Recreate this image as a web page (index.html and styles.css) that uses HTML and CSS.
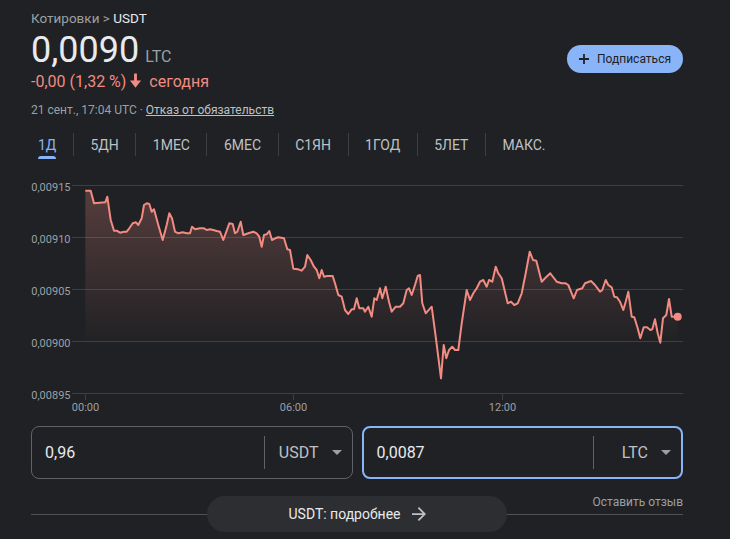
FILE: index.html
```html
<!DOCTYPE html>
<html lang="ru">
    <head>
        <meta charset="utf-8">
        <title>USDT / LTC</title>
        <link rel="stylesheet" href="styles.css">
    </head>
    <body>
        <div class="page">
            <div class="crumbs"><span>Котировки &gt; </span><span class="sym">USDT</span></div>

            <div class="quote">
                <div>
                    <div class="price">0,0090<span class="cur">LTC</span></div>
                    <div class="change">-0,00 (1,32 %)<svg viewBox="0 0 24 24"><path d="M10.2 3h3.6v9h5.2L12 21 5 12h5.2z"/></svg> сегодня</div>
                </div>
                <button class="follow">
                    <svg viewBox="0 0 10 10"><path d="M5 0v10M0 5h10"/></svg>
                    Подписаться
                </button>
            </div>

            <div class="stamp">21 сент., 17:04 UTC · <a href="#">Отказ от обязательств</a></div>

            <!-- period tabs -->
            <div class="ranges">
                <div class="range active">1Д</div>
                <div class="sep"></div>
                <div class="range">5ДН</div>
                <div class="sep"></div>
                <div class="range">1МЕС</div>
                <div class="sep"></div>
                <div class="range">6МЕС</div>
                <div class="sep"></div>
                <div class="range">С1ЯН</div>
                <div class="sep"></div>
                <div class="range">1ГОД</div>
                <div class="sep"></div>
                <div class="range">5ЛЕТ</div>
                <div class="sep"></div>
                <div class="range">МАКС.</div>
            </div>

            <!-- chart uses page coordinates in its viewBox -->
            <svg class="chart" viewBox="31 165 652 250">
                <defs>
                    <linearGradient id="fade" gradientUnits="userSpaceOnUse" x1="0" y1="190" x2="0" y2="345">
                        <stop offset="0" stop-color="#f28b82" stop-opacity="0.26"/>
                        <stop offset="1" stop-color="#f28b82" stop-opacity="0"/>
                    </linearGradient>
                </defs>
                <g class="grid">
                    <line x1="72" y1="185.5" x2="683" y2="185.5"/>
                    <line x1="72" y1="237.5" x2="683" y2="237.5"/>
                    <line x1="72" y1="289.5" x2="683" y2="289.5"/>
                    <line x1="72" y1="341.5" x2="683" y2="341.5"/>
                    <line x1="72" y1="393.5" x2="683" y2="393.5"/>
                    <line x1="85.5" y1="394" x2="85.5" y2="400"/>
                    <line x1="293.5" y1="394" x2="293.5" y2="400"/>
                    <line x1="502.5" y1="394" x2="502.5" y2="400"/>
                </g>
                <g class="axis">
                    <text x="70.5" y="190.5" text-anchor="end">0,00915</text>
                    <text x="70.5" y="242.5" text-anchor="end">0,00910</text>
                    <text x="70.5" y="294.5" text-anchor="end">0,00905</text>
                    <text x="70.5" y="346.5" text-anchor="end">0,00900</text>
                    <text x="70.5" y="398.5" text-anchor="end">0,00895</text>
                    <text x="85.5" y="411" text-anchor="middle">00:00</text>
                    <text x="293.5" y="411" text-anchor="middle">06:00</text>
                    <text x="502.5" y="411" text-anchor="middle">12:00</text>
                </g>
                <path class="area" d="M85.3,394 L85.3,190.7 90.7,190.7 94,203.3 105.3,202.3 107.3,196.7 110.7,220 114,230.7 116.7,230.7 120,232.7 124,231.7 126.7,231.7 129.3,228.3 132.7,223.3 136,222.3 138.3,225 141.7,218.3 144,205 146.7,203.3 149.3,204 151.7,211.7 154,209.3 158.3,225 162.7,240 166.7,225 169.3,213.3 172,218.3 175,231.7 178.3,233.3 182.7,232.3 186.7,233.3 190,233.3 192,226.7 195,229.3 200,228.3 204,228.3 206.7,230 210,229.3 213.3,230 216.7,231 220,231.7 223.3,240 229.3,223.3 232.7,224 235,233.3 237.3,231.7 240.7,221.7 243.3,235 248.3,233.3 253.3,231.7 256.7,233.3 259.3,236.7 261.7,246.7 264,235 266.7,234.3 269.3,231 272,240 275.3,238.3 278.3,237.3 284,238.3 287.3,249.3 290,250 293.3,268.7 298.3,269.3 301.7,270.7 305,266.7 307.3,255 310.7,260 314,266.7 316.7,270 319.3,278.3 321.7,270 324,276.7 327.3,276 332.7,276 335,283.3 338.3,295 341.7,296.7 345,310 348.3,314 351.7,309.3 354,309.3 356.7,298.3 359.3,308.3 363.3,308.3 365,311.7 368.3,306.7 371.7,316.7 374.3,298.3 376.7,300 380,288.3 382.3,298.3 385.7,286.7 389,301.7 391.7,311.7 395.7,306.7 400,306.7 403.3,303.3 406.7,290 409,288.3 411.7,295 415,285 417.7,276 420,275 422.3,303.3 425.7,313.3 431.7,306.7 435.7,336.7 441,378.3 443.7,345 446.3,358.3 449,350 452.3,346.7 455,350 458.3,350 461.7,323.3 466.7,290 470,300 473.3,293.3 476.7,288.3 480,281.7 483.3,280 486.7,286.7 489,280 492.3,281.7 495.7,266.7 498.3,273.3 501.7,278.3 507.7,303.3 511,301.7 514.3,305 517.7,303.3 521.7,293.3 525.7,273.3 529.7,251.7 533,260 536.3,260.7 541.7,281.7 545,278.3 550.3,273.3 552.3,276 556.7,281.7 561.7,283.3 565.7,283.3 568.3,285 573.7,298.3 577,290 582.3,288.3 585,283.3 591,281 595,285 600,291.7 602.3,290 605.7,280 608.3,285 611.7,287.3 614.3,296.7 617,297.3 620,301.7 623.3,310 625.7,301.7 628.3,291.7 631.7,316.7 634.3,317.3 637.7,328.3 640.3,338.3 643.7,327.3 647,327.3 650.3,330 652.3,329.3 655,319.3 657.7,333.3 660.3,342.7 663,318.3 666.3,315 669,299 671.7,316.7 677.7,316.7 L677.7,394 Z"/>
                <polyline class="line" points="85.3,190.7 90.7,190.7 94,203.3 105.3,202.3 107.3,196.7 110.7,220 114,230.7 116.7,230.7 120,232.7 124,231.7 126.7,231.7 129.3,228.3 132.7,223.3 136,222.3 138.3,225 141.7,218.3 144,205 146.7,203.3 149.3,204 151.7,211.7 154,209.3 158.3,225 162.7,240 166.7,225 169.3,213.3 172,218.3 175,231.7 178.3,233.3 182.7,232.3 186.7,233.3 190,233.3 192,226.7 195,229.3 200,228.3 204,228.3 206.7,230 210,229.3 213.3,230 216.7,231 220,231.7 223.3,240 229.3,223.3 232.7,224 235,233.3 237.3,231.7 240.7,221.7 243.3,235 248.3,233.3 253.3,231.7 256.7,233.3 259.3,236.7 261.7,246.7 264,235 266.7,234.3 269.3,231 272,240 275.3,238.3 278.3,237.3 284,238.3 287.3,249.3 290,250 293.3,268.7 298.3,269.3 301.7,270.7 305,266.7 307.3,255 310.7,260 314,266.7 316.7,270 319.3,278.3 321.7,270 324,276.7 327.3,276 332.7,276 335,283.3 338.3,295 341.7,296.7 345,310 348.3,314 351.7,309.3 354,309.3 356.7,298.3 359.3,308.3 363.3,308.3 365,311.7 368.3,306.7 371.7,316.7 374.3,298.3 376.7,300 380,288.3 382.3,298.3 385.7,286.7 389,301.7 391.7,311.7 395.7,306.7 400,306.7 403.3,303.3 406.7,290 409,288.3 411.7,295 415,285 417.7,276 420,275 422.3,303.3 425.7,313.3 431.7,306.7 435.7,336.7 441,378.3 443.7,345 446.3,358.3 449,350 452.3,346.7 455,350 458.3,350 461.7,323.3 466.7,290 470,300 473.3,293.3 476.7,288.3 480,281.7 483.3,280 486.7,286.7 489,280 492.3,281.7 495.7,266.7 498.3,273.3 501.7,278.3 507.7,303.3 511,301.7 514.3,305 517.7,303.3 521.7,293.3 525.7,273.3 529.7,251.7 533,260 536.3,260.7 541.7,281.7 545,278.3 550.3,273.3 552.3,276 556.7,281.7 561.7,283.3 565.7,283.3 568.3,285 573.7,298.3 577,290 582.3,288.3 585,283.3 591,281 595,285 600,291.7 602.3,290 605.7,280 608.3,285 611.7,287.3 614.3,296.7 617,297.3 620,301.7 623.3,310 625.7,301.7 628.3,291.7 631.7,316.7 634.3,317.3 637.7,328.3 640.3,338.3 643.7,327.3 647,327.3 650.3,330 652.3,329.3 655,319.3 657.7,333.3 660.3,342.7 663,318.3 666.3,315 669,299 671.7,316.7 677.7,316.7"/>
                <circle class="dot" cx="677.7" cy="316.7" r="4"/>
            </svg>

            <!-- currency converter -->
            <div class="converter">
                <div class="field">
                    <div class="amount">0,96</div>
                    <div class="unit">USDT<span class="caret"></span></div>
                </div>
                <div class="field focus">
                    <div class="amount">0,0087</div>
                    <div class="unit">LTC<span class="caret"></span></div>
                </div>
            </div>

            <div class="feedback"><a href="#">Оставить отзыв</a></div>

            <div class="more">
                <a class="more-btn" href="#">USDT: подробнее
                    <svg viewBox="4 4 16 16"><path d="M12 4l-1.41 1.41L16.17 11H4v2h12.17l-5.58 5.59L12 20l8-8z"/></svg>
                </a>
            </div>
        </div>
    </body>
</html>
```

FILE: styles.css
```css
body {
    margin: 0;
    background-color: #202124;
    color: #e8eaed;
    font-family: Roboto, "Liberation Sans", Arial, sans-serif;
}

.page {
    width: 652px;
    margin-left: 31px;
    padding-top: 7px;
}

.crumbs {
    font-size: 13.5px;
    line-height: 22px;
    color: #9aa0a6;
}
.crumbs .sym {
    color: #e8eaed;
}

.quote {
    display: flex;
    justify-content: space-between;
    align-items: flex-start;
    margin-top: 2px;
}
.price {
    font-size: 36px;
    line-height: 38px;
}
.price .cur {
    font-size: 16px;
    line-height: 16px;
    color: #9aa0a6;
    margin-left: 6px;
}
.change {
    margin-top: 2px;
    font-size: 16px;
    line-height: 20px;
    color: #f28b82;
}
.change svg {
    width: 19px;
    height: 19px;
    vertical-align: -3px;
    fill: currentColor;
}

.follow {
    margin-top: 14px;
    height: 28px;
    padding: 0 12px;
    border: none;
    border-radius: 14px;
    background-color: #8ab4f8;
    color: #202124;
    font-family: inherit;
    font-size: 12px;
    display: flex;
    align-items: center;
    gap: 8px;
}
.follow svg {
    width: 10px;
    height: 10px;
    stroke: #202124;
    stroke-width: 1.8;
}

.stamp {
    margin-top: 10px;
    font-size: 12px;
    line-height: 16px;
    color: #9aa0a6;
}
.stamp a {
    color: #bdc1c6;
}

.ranges {
    display: flex;
    margin-top: 15px;
    height: 26px;
}
.range {
    display: flex;
    flex-direction: column;
    padding: 2px 7px 0;
    font-size: 14px;
    line-height: 20px;
    color: #bdc1c6;
}
.range::after {
    content: "";
    height: 3px;
    margin-top: 1px;
    border-radius: 3px 3px 0 0;
}
.range.active {
    color: #8ab4f8;
}
.range.active::after {
    background-color: #8ab4f8;
}
.sep {
    width: 1px;
    height: 23px;
    margin: 0 9.5px;
    background-color: #3c4043;
}

.chart {
    display: block;
    margin-top: 6px;
    width: 652px;
    height: 250px;
}
.grid line {
    stroke: #3c4043;
    stroke-width: 1;
}
.axis text {
    font-size: 11px;
    fill: #9aa0a6;
}
.area {
    fill: url(#fade);
}
.line {
    fill: none;
    stroke: #f28b82;
    stroke-width: 2;
    stroke-linejoin: round;
}
.dot {
    fill: #f28b82;
}

.converter {
    display: grid;
    grid-template-columns: 1fr 1fr;
    gap: 9px;
    margin-top: 11px;
}
.field {
    height: 53px;
    box-sizing: border-box;
    border: 1px solid #5f6368;
    border-radius: 8px;
    display: flex;
    align-items: center;
}
.field.focus {
    border: 2px solid #8ab4f8;
}
.amount {
    flex: 1;
    padding-left: 13px;
    font-size: 16px;
}
.unit {
    width: 88px;
    height: 33px;
    box-sizing: border-box;
    border-left: 1px solid #5f6368;
    display: flex;
    align-items: center;
    justify-content: flex-end;
    gap: 13px;
    padding-right: 10px;
    font-size: 16px;
    color: #bdc1c6;
}
.caret {
    border-left: 5px solid transparent;
    border-right: 5px solid transparent;
    border-top: 5px solid #9aa0a6;
}

.feedback {
    margin-top: 15px;
    text-align: right;
    font-size: 12px;
    line-height: 16px;
}
.feedback a {
    color: #9aa0a6;
    text-decoration: none;
}

.more {
    margin-top: -14px;
    height: 36px;
    display: flex;
    justify-content: center;
    background: linear-gradient(#4f5358, #4f5358) center / 100% 1px no-repeat;
}
.more-btn {
    width: 300px;
    height: 36px;
    border-radius: 18px;
    background-color: #2d2e31;
    display: flex;
    align-items: center;
    justify-content: center;
    gap: 11px;
    color: #e8eaed;
    font-size: 14px;
    text-decoration: none;
}
.more-btn svg {
    width: 14px;
    height: 14px;
    fill: #bdc1c6;
}
```
